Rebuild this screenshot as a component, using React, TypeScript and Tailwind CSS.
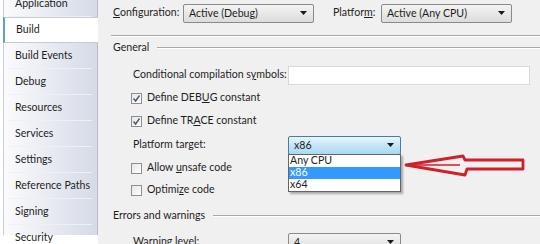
import React from 'react';

const tabs = [
  'Application',
  'Build',
  'Build Events',
  'Debug',
  'Resources',
  'Services',
  'Settings',
  'Reference Paths',
  'Signing',
  'Security',
];

const Arrow: React.FC = () => (
  <svg width="7" height="4" viewBox="0 0 7 4" className="shrink-0">
    <path d="M0 0 H7 L3.5 4 Z" fill="#1a1a1a" />
  </svg>
);

const Combo: React.FC<{ value: React.ReactNode; width: string; focused?: boolean }> = ({ value, width, focused }) => (
  <div
    className={`${width} shrink-0 h-[19px] flex items-center justify-between pl-[5px] pr-[6px] rounded-[2px] border ${
      focused
        ? 'border-[#3c7fb1] bg-gradient-to-b from-[#eaf6fd] via-[#c4e5f6] to-[#a7d9f5]'
        : 'border-[#8a8a8a] bg-gradient-to-b from-[#f4f4f4] to-[#dcdcdc]'
    }`}
  >
    <span className="leading-none whitespace-nowrap">{value}</span>
    <Arrow />
  </div>
);

const CheckBox: React.FC<{ checked?: boolean }> = ({ checked }) => (
  <div className="w-[11px] h-[11px] border border-[#8f8f8f] bg-gradient-to-br from-[#e6e6e6] to-white flex items-center justify-center shrink-0">
    {checked && (
      <svg width="9" height="9" viewBox="0 0 9 9">
        <path d="M1.5 4.5 L3.6 7 L7.5 1.5" stroke="#4a5a6a" strokeWidth="1.4" fill="none" />
      </svg>
    )}
  </div>
);

const Section: React.FC<{ title: string; className?: string }> = ({ title, className }) => (
  <div className={`flex items-center gap-[8px] pl-[15px] h-[14px] ${className ?? ''}`}>
    <span className="shrink-0 whitespace-nowrap">{title}</span>
    <div className="flex-1 flex flex-col">
      <div className="h-px bg-[#a8a8a8]" />
      <div className="h-px bg-white" />
    </div>
  </div>
);

const CheckRow: React.FC<{ checked?: boolean; className: string; children: React.ReactNode }> = ({
  checked,
  className,
  children,
}) => (
  <div className={`${className} flex items-center gap-[5px] pl-[33px]`}>
    <CheckBox checked={checked} />
    <span className="whitespace-nowrap">{children}</span>
  </div>
);

export default function App() {
  return (
    <div
      className="w-[540px] h-[244px] overflow-hidden flex bg-white text-[10.6px] text-[#1e1e1e]"
      style={{ fontFamily: 'Lato, "Noto Sans", sans-serif' }}
    >
      {/* sidebar */}
      <div className="w-[98px] shrink-0 pl-[3px] overflow-hidden">
        <div className="h-full border-l border-[#c9ced8] border-r border-r-[#b7bcc8] bg-gradient-to-r from-[#fbfbfd] to-[#d5dae6]">
          <div className="-mt-[9px]">
            {tabs.map((t) =>
              t === 'Build' ? (
                <div
                  key={t}
                  className="h-[26px] flex items-center pl-[11px] bg-white border-y border-[#c6cad3] border-l-2 border-l-[#5f9fd0] -ml-px -mr-px whitespace-nowrap"
                >
                  {t}
                </div>
              ) : (
                <div key={t} className="h-[26px] flex flex-col">
                  <div className="flex-1 flex items-center pl-[11px] whitespace-nowrap">{t}</div>
                  <div className="h-px mx-[5px] bg-[#eef0f5]" />
                </div>
              )
            )}
          </div>
        </div>
      </div>

      {/* main */}
      <div className="relative flex-1 bg-[#f0f0f0]">
        <div className="h-[26px] flex items-center pl-[15px] whitespace-nowrap">
          <span className="w-[70px] shrink-0">
            <u>C</u>onfiguration:
          </span>
          <Combo value="Active (Debug)" width="w-[131px]" />
          <span className="ml-[19px] w-[48px] shrink-0">
            Platfor<u>m</u>:
          </span>
          <Combo value="Active (Any CPU)" width="w-[131px]" />
        </div>

        <div className="mt-[9px] ml-[13px] flex flex-col">
          <div className="h-px bg-[#a8a8a8]" />
          <div className="h-px bg-white" />
        </div>

        <Section title="General" className="mt-[4px]" />

        <div className="mt-[10px] h-[20px] flex items-center pl-[35px] whitespace-nowrap">
          <span className="w-[155px] shrink-0">
            Conditional compilation s<u>y</u>mbols:
          </span>
          <div className="w-[242px] h-[19px] bg-white border border-[#d8d8d8]" />
        </div>

        <CheckRow checked className="h-[26px]">
          Define DEB<u>U</u>G constant
        </CheckRow>
        <CheckRow checked className="h-[20px]">
          Define TR<u>A</u>CE constant
        </CheckRow>

        <div className="h-[28px] flex items-center pl-[35px] whitespace-nowrap">
          <span className="w-[155px] shrink-0">
            Platform tar<u>g</u>et:
          </span>
          <div className="relative">
            <Combo value="x86" width="w-[113px]" focused />
            <div className="absolute left-0 top-[18px] w-[113px] bg-white border border-[#646464] shadow-[2px_2px_2px_rgba(0,0,0,0.3)] leading-none">
              <div className="h-[12px] flex items-center pl-[1px]">Any CPU</div>
              <div className="h-[12px] flex items-center pl-[1px] bg-[#3399ff] text-white">x86</div>
              <div className="h-[12px] flex items-center pl-[1px]">x64</div>
            </div>
          </div>
        </div>

        <CheckRow className="h-[18px]">
          Allow <u>u</u>nsafe code
        </CheckRow>
        <CheckRow className="h-[26px]">
          Optimi<u>z</u>e code
        </CheckRow>

        <Section title="Errors and warnings" className="mt-[6px]" />

        <div className="mt-[7px] h-[24px] flex items-center pl-[35px] whitespace-nowrap">
          <span className="w-[155px] shrink-0">
            Warning <u>l</u>evel:
          </span>
          <Combo value="4" width="w-[113px]" />
        </div>

        {/* red annotation arrow */}
        <svg className="absolute left-0 top-0 pointer-events-none" width="442" height="244" viewBox="98 0 442 244">
          <path
            d="M406 165 L463 156 L465 160 L523 160 L523 169 L467 169 L465 175 Z"
            fill="none"
            stroke="#d0202a"
            strokeWidth="2.8"
            strokeLinejoin="round"
          />
          <path d="M409 165 L460 165" stroke="#d0202a" strokeWidth="1.4" fill="none" />
        </svg>
      </div>
    </div>
  );
}
